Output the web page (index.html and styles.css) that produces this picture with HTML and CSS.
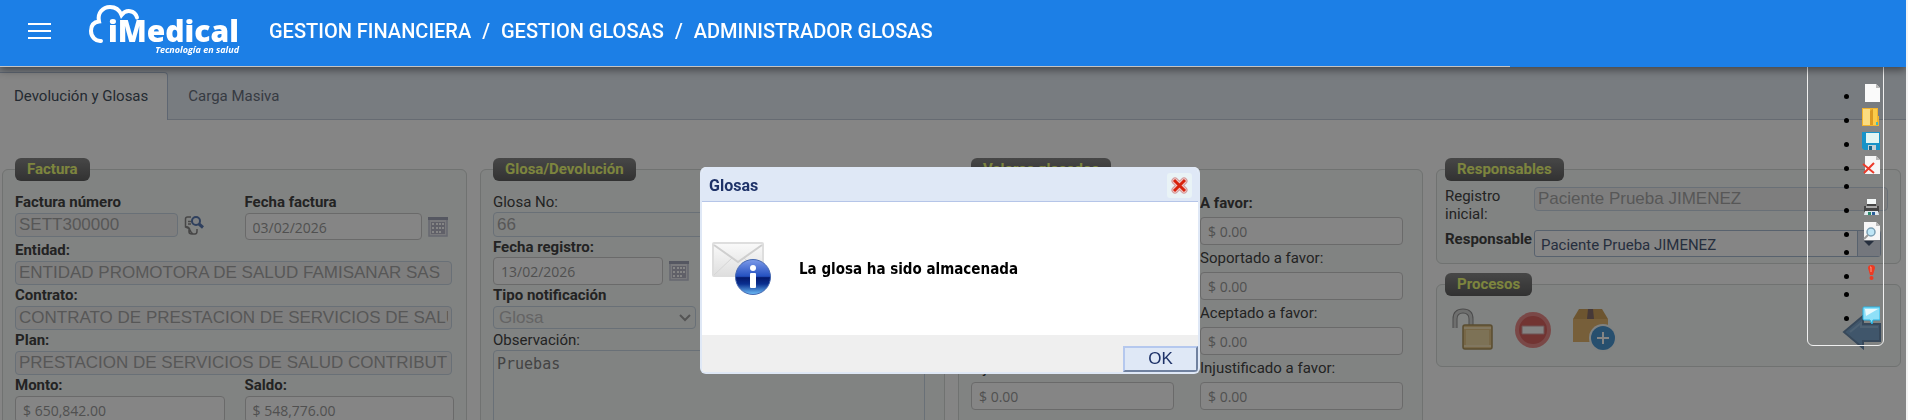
FILE: index.html
```
<!DOCTYPE html>
<html lang="es">

<head>
    <meta charset="UTF-8">
    <meta name="viewport" content="width=device-width, initial-scale=1.0">
    <title>Administrador Glosas</title>
    <link rel="stylesheet" href="styles.css">
</head>

<body>
    <header class="header">
        <button class="menu_btn" type="button" aria-label="Menu">
            <span></span>
            <span></span>
            <span></span>
        </button>
        <a class="logo" href="#" aria-label="iMedical">
            <svg width="156" height="56" viewBox="0 0 156 56">
                <path d="M13 41C8 41.500 3 37 3 31C3 25 6 22 11 21.500C9 13 15 7 22 7C28 7 31.500 10 33.500 15C38 9 47 10 49 17.500" fill="none" stroke="#fff" stroke-width="4" stroke-linecap="round" />
                <text class="logo_name" x="20" y="42">iMedical</text>
                <text class="logo_sub" x="151" y="53" text-anchor="end">Tecnología en salud</text>
            </svg>
        </a>
        <nav class="crumbs">
            <a href="#">GESTION FINANCIERA</a>
            <span>/</span>
            <a href="#">GESTION GLOSAS</a>
            <span>/</span>
            <a href="#">ADMINISTRADOR GLOSAS</a>
        </nav>
    </header>

    <main class="page">
        <div class="tabs">
            <a href="#" class="active">Devolución y Glosas</a>
            <a href="#">Carga Masiva</a>
        </div>

        <form class="panels">
            <!-- Factura -->
            <fieldset class="box factura">
                <legend>Factura</legend>
                <div class="row">
                    <div class="half">
                        <label class="b" for="numero">Factura número</label>
                        <div class="line">
                            <input class="dis numero" id="numero" type="text" value="SETT300000" disabled>
                            <svg class="find" width="20" height="20" viewBox="0 0 20 20">
                                <path d="M0 0H20V20H0Z" fill="#fff" opacity=".2" />
                                <path d="M7 2H3.500Q1.500 2 1.500 4V12L5 13.500V17Q5 19 8 19H11Q13 19 13 16V14M1.500 12Q5 11 6 15Q7 18 9 19M4 6.500H8M4 9H7" fill="none" stroke="#888" stroke-width="1.500" />
                                <circle cx="12" cy="6" r="4" fill="#f4f7fc" stroke="#5b7cb4" stroke-width="2" />
                                <path d="M15 9L19 12.500" stroke="#5b7cb4" stroke-width="3" />
                            </svg>
                        </div>
                    </div>
                    <div class="half">
                        <label class="b" for="fecha">Fecha factura</label>
                        <div class="line">
                            <input class="num fecha" id="fecha" type="text" value="03/02/2026" disabled>
                            <svg class="cal" width="20" height="20" viewBox="0 0 20 20">
                                <path d="M1 1H19V19H1Z" fill="#e8e8ee" stroke="#c4c7d6" stroke-width="1.500" />
                                <path d="M0 1.500H20" stroke="#a4a7ba" stroke-width="3" />
                                <path d="M3 5H17V17H3Z" fill="#b8b8c8" />
                                <path d="M4 6h2v2h-2zM8 6h2v2h-2zM11 6h2v2h-2zM14 6h2v2h-2zM4 10h2v2h-2zM8 10h2v2h-2zM11 10h2v2h-2zM14 10h2v2h-2zM4 14h2v2h-2zM8 14h2v2h-2zM11 14h2v2h-2z" fill="#fff" />
                            </svg>
                        </div>
                    </div>
                </div>
                <label class="b" for="entidad">Entidad:</label>
                <input class="dis" id="entidad" type="text" value="ENTIDAD PROMOTORA DE SALUD FAMISANAR SAS" disabled>
                <label class="b" for="contrato">Contrato:</label>
                <input class="dis" id="contrato" type="text" value="CONTRATO DE PRESTACION DE SERVICIOS DE SALUD" disabled>
                <label class="b" for="plan">Plan:</label>
                <input class="dis" id="plan" type="text" value="PRESTACION DE SERVICIOS DE SALUD CONTRIBUTIVO" disabled>
                <div class="row">
                    <div class="half">
                        <label class="b" for="monto">Monto:</label>
                        <input class="num" id="monto" type="text" value="$ 650,842.00" disabled>
                    </div>
                    <div class="half">
                        <label class="b" for="saldo">Saldo:</label>
                        <input class="num" id="saldo" type="text" value="$ 548,776.00" disabled>
                    </div>
                </div>
            </fieldset>

            <!-- Glosa -->
            <fieldset class="box glosa">
                <legend>Glosa/Devolución</legend>
                <label for="glosano">Glosa No:</label>
                <input class="dis" id="glosano" type="text" value="66" disabled>
                <label class="b" for="registro">Fecha registro:</label>
                <div class="line">
                    <input class="num registro" id="registro" type="text" value="13/02/2026" disabled>
                    <svg class="cal" width="20" height="20" viewBox="0 0 20 20">
                        <path d="M1 1H19V19H1Z" fill="#e8e8ee" stroke="#c4c7d6" stroke-width="1.500" />
                        <path d="M0 1.500H20" stroke="#a4a7ba" stroke-width="3" />
                        <path d="M3 5H17V17H3Z" fill="#b8b8c8" />
                        <path d="M4 6h2v2h-2zM8 6h2v2h-2zM11 6h2v2h-2zM14 6h2v2h-2zM4 10h2v2h-2zM8 10h2v2h-2zM11 10h2v2h-2zM14 10h2v2h-2zM4 14h2v2h-2zM8 14h2v2h-2zM11 14h2v2h-2z" fill="#fff" />
                    </svg>
                </div>
                <label class="b" for="tipo">Tipo notificación</label>
                <div class="select">
                    <select class="dis" id="tipo" disabled>
                        <option>Glosa</option>
                    </select>
                    <svg width="12" height="8" viewBox="0 0 12 8">
                        <path d="M1 1L6 6L11 1" fill="none" stroke="#a2a2a2" stroke-width="2" />
                    </svg>
                </div>
                <label for="obs">Observación:</label>
                <textarea id="obs" disabled>Pruebas</textarea>
            </fieldset>

            <!-- Valores -->
            <fieldset class="box valores">
                <legend>Valores glosados</legend>
                <div class="vals">
                    <div><label class="b" for="v1">Glosado:</label><input class="num" id="v1" type="text" value="$ 0.00" disabled></div>
                    <div><label class="b" for="v2">A favor:</label><input class="num" id="v2" type="text" value="$ 0.00" disabled></div>
                    <div><label for="v3">Soportado:</label><input class="num" id="v3" type="text" value="$ 0.00" disabled></div>
                    <div><label for="v4">Soportado a favor:</label><input class="num" id="v4" type="text" value="$ 0.00" disabled></div>
                    <div><label for="v5">Aceptado:</label><input class="num" id="v5" type="text" value="$ 0.00" disabled></div>
                    <div><label for="v6">Aceptado a favor:</label><input class="num" id="v6" type="text" value="$ 0.00" disabled></div>
                    <div><label for="v7">Injustificado:</label><input class="num" id="v7" type="text" value="$ 0.00" disabled></div>
                    <div><label for="v8">Injustificado a favor:</label><input class="num" id="v8" type="text" value="$ 0.00" disabled></div>
                </div>
            </fieldset>

            <div class="side">
                <fieldset class="box resp">
                    <legend>Responsables</legend>
                    <div class="pair">
                        <label for="inicial">Registro inicial:</label>
                        <input class="dis" id="inicial" type="text" value="Paciente Prueba JIMENEZ" disabled>
                    </div>
                    <div class="pair">
                        <label class="b" for="responsable">Responsable</label>
                        <div class="combo">
                            <input id="responsable" type="text" value="Paciente Prueba JIMENEZ">
                            <button type="button" aria-label="Abrir lista"></button>
                        </div>
                    </div>
                </fieldset>
                <fieldset class="box procs">
                    <legend>Procesos</legend>
                    <div class="icons">
                        <button type="button" aria-label="Desbloquear">
                            <svg width="44" height="44" viewBox="0 0 44 44">
                                <path d="M4 20V11Q4 3 12 3Q20 3 20 11V18" fill="none" stroke="#777" stroke-width="5" />
                                <path d="M4 20V11Q4 3 12 3Q20 3 20 11V18" fill="none" stroke="#ccc" stroke-width="3" />
                                <rect x="12" y="17" width="29" height="24" rx="2" fill="#e0ba6c" stroke="#9a7a35" stroke-width="1.500" />
                                <rect x="15" y="22" width="23" height="15" fill="#efd292" />
                                <path d="M13 20H40M13 38H40" stroke="#f7dfa8" stroke-width="2" />
                            </svg>
                        </button>
                        <button type="button" aria-label="Anular">
                            <svg width="44" height="44" viewBox="0 0 44 44">
                                <circle cx="22" cy="22" r="18" fill="#e8706e" />
                                <circle cx="22" cy="22" r="14" fill="#d33f3c" />
                                <path d="M11 18H33V26H11Z" fill="#fff" stroke="#c88" stroke-width="1" />
                            </svg>
                        </button>
                        <button type="button" aria-label="Agregar paquete">
                            <svg width="46" height="44" viewBox="0 0 46 44">
                                <path d="M8 1H31L37 11H2Z" fill="#c98f35" />
                                <path d="M2 11H37V34H2Z" fill="#e0a54d" />
                                <path d="M17 1H22L23 11H16Z" fill="#6a4a4a" />
                                <circle cx="32" cy="30" r="14" fill="#f6faf8" />
                                <circle cx="32" cy="30" r="12" fill="#2280cc" />
                                <path d="M32 24V36M26 30H38" stroke="#fff" stroke-width="2" />
                            </svg>
                        </button>
                        <button class="back" type="button" aria-label="Regresar">
                            <svg width="40" height="36" viewBox="0 0 40 36">
                                <path d="M2 18L21 2V10H38V27H21V34Z" fill="#5d92c4" stroke="#47709a" stroke-width="2" />
                                <path d="M8 18L19 9V13H36" fill="none" stroke="#7cabd6" stroke-width="2" />
                            </svg>
                        </button>
                    </div>
                </fieldset>
            </div>
        </form>
    </main>

    <div class="overlay"></div>

    <ul class="tools">
        <li>
            <svg width="18" height="18" viewBox="0 0 18 18">
                <path d="M3 0H14L18 4V18H3Z" fill="#fafafa" />
                <path d="M14 0V4H18Z" fill="#b8b8b8" />
            </svg>
        </li>
        <li>
            <svg width="18" height="18" viewBox="0 0 18 18">
                <path d="M0 0H16V8H17V18H0Z" fill="#f2b32c" />
                <path d="M1 1H8V17H1Z" fill="#fbdc80" />
                <path d="M8 3L11 1V17H8Z" fill="#dc9a22" />
                <path d="M11 1H15V17H11Z" fill="#fbcb4a" />
                <path d="M14 14H16V17H14Z" fill="#4bb" />
            </svg>
        </li>
        <li>
            <svg width="18" height="18" viewBox="0 0 18 18">
                <path d="M0 0H18V18H2L0 16Z" fill="#1793c8" />
                <path d="M4 1H17V11H4Z" fill="#e2f5f2" />
                <path d="M6 13H14V18H6Z" fill="#c3d0d6" />
                <path d="M7 14H10V18H7Z" fill="#17658a" />
            </svg>
        </li>
        <li>
            <svg width="18" height="18" viewBox="0 0 18 18">
                <path d="M3 0H14L18 4V18H3Z" fill="#f6f6f6" />
                <path d="M14 0V4H18Z" fill="#b8b8b8" />
                <path d="M1 8L12 17M12 7L2 17" stroke="#ec3a2a" stroke-width="2" />
            </svg>
        </li>
        <li class="sep"></li>
        <li>
            <svg width="18" height="18" viewBox="0 0 18 18">
                <path d="M5 1H14V7H5Z" fill="#f4f8f8" />
                <path d="M2 8H5V6H14V8H17V14H2Z" fill="#444" />
                <path d="M4 8H15V10H4Z" fill="#aaa" />
                <path d="M3 13H16L17 17H2Z" fill="#dfe8ee" />
                <path d="M6 14h3v3h-3z" fill="#2a8a6a" />
                <path d="M10 14h3v3h-3z" fill="#2a5f9a" />
            </svg>
        </li>
        <li>
            <svg width="18" height="18" viewBox="0 0 18 18">
                <path d="M2 0H14L18 4V18H2Z" fill="#f6f6f6" />
                <path d="M14 0V4H18Z" fill="#b8b8b8" />
                <circle cx="9" cy="10" r="4" fill="#bfe6f6" stroke="#7a9fb4" stroke-width="1.500" />
                <path d="M6 13L2 17" stroke="#999" stroke-width="2" />
            </svg>
        </li>
        <li class="sep"></li>
        <li>
            <svg width="18" height="18" viewBox="0 0 18 18">
                <path d="M6 4Q6 1 9.500 1Q13 1 13 4L11 11H8Z" fill="#ee3a22" />
                <circle cx="9.500" cy="14" r="2" fill="#ee3a22" />
                <path d="M8 3H9V8" fill="none" stroke="#ff9a80" stroke-width="1" />
            </svg>
        </li>
        <li class="sep"></li>
        <li>
            <svg width="18" height="18" viewBox="0 0 18 18">
                <path d="M1 2Q1 1 2 1H18V14H11L10 18L8 14H2Q1 14 1 13Z" fill="#8fe0f8" stroke="#27b4e4" stroke-width="1" />
                <path d="M3 3H16L4 10Z" fill="#e6fafe" />
            </svg>
        </li>
    </ul>

    <div class="dialog" role="dialog" aria-labelledby="dlg-title">
        <div class="dialog_title">
            <h2 id="dlg-title">Glosas</h2>
            <button type="button" aria-label="Cerrar">
                <svg width="17" height="17" viewBox="0 0 17 17">
                    <path d="M4 4L13 13M13 4L4 13" stroke="#d49a9a" stroke-width="7" stroke-linecap="round" />
                    <path d="M4 4L13 13M13 4L4 13" stroke="#efcaca" stroke-width="5" stroke-linecap="round" />
                    <path d="M3 3L14 14M14 3L3 14" stroke="#d8220c" stroke-width="3" />
                </svg>
            </button>
        </div>
        <div class="dialog_body">
            <svg width="60" height="54" viewBox="0 0 60 54">
                <defs>
                    <linearGradient id="env" x1="0" y1="0" x2="0" y2="1">
                        <stop offset="0" stop-color="#fafafa" />
                        <stop offset="1" stop-color="#dedede" />
                    </linearGradient>
                    <linearGradient id="ball" x1="0" y1="0" x2="0" y2="1">
                        <stop offset="0" stop-color="#7d9bea" />
                        <stop offset="0.480" stop-color="#2450c0" />
                        <stop offset="0.520" stop-color="#04196c" />
                        <stop offset="0.700" stop-color="#0a2f90" />
                        <stop offset="1" stop-color="#6fc0fa" />
                    </linearGradient>
                </defs>
                <rect x="1" y="1" width="50" height="33" rx="1" fill="url(#env)" stroke="#dedede" stroke-width="2" />
                <path d="M2 33L20 16M50 33L32 16" stroke="#d6d6d6" stroke-width="1" />
                <path d="M2 3L26 20L50 3" fill="none" stroke="#cfcfcf" stroke-width="2" />
                <circle cx="41" cy="35" r="17.500" fill="url(#ball)" stroke="#4668b0" stroke-width="1" />
                <circle cx="41" cy="26" r="3" fill="#fff" />
                <rect x="38" y="31" width="6" height="15" rx="1" fill="#fff" />
            </svg>
            <p>La glosa ha sido almacenada</p>
        </div>
        <div class="dialog_foot">
            <button type="button">OK</button>
        </div>
    </div>
</body>

</html>
```
FILE: styles.css
```
* {
    margin: 0;
    padding: 0;
    box-sizing: border-box;
}

html {
    background: #f3f3f3;
}

body {
    margin-right: 2px;
    font-family: Roboto, "Liberation Sans", sans-serif;
    font-size: 15px;
    color: #444;
}

a {
    text-decoration: none;
    color: inherit;
}

button {
    border: none;
    background: none;
}

svg {
    display: block;
    flex: none;
}

/* cabecera */
.header {
    position: relative;
    z-index: 5;
    height: 67px;
    padding: 0 28px 16px;
    display: flex;
    align-items: center;
    background: linear-gradient(#c4c4c4, #c4c4c4) left bottom / calc(100% - 396px) 1px no-repeat #1c7fe6;
    box-shadow: 0 3px 8px rgba(0, 0, 0, .45);
    color: #fff;
}

.menu_btn {
    width: 23px;
    padding-top: 11px;
    display: flex;
    flex-direction: column;
    gap: 5px;
}

.menu_btn span {
    height: 2px;
    background: #fff;
}

.logo {
    height: 56px;
    margin: 5px 0 0 37px;
}

.logo_name {
    font: 800 30px "Open Sans", sans-serif;
    fill: #fff;
}

.logo_sub {
    font: italic 700 9px "Open Sans", sans-serif;
    fill: #fff;
}

.crumbs {
    margin: 11px 0 0 25px;
    display: flex;
    gap: 11px;
    font-size: 20px;
    font-weight: 500;
    line-height: 24px;
}

/* pestañas */
.page {
    height: calc(100vh - 67px);
    overflow: hidden;
    background: #fff;
}

.tabs {
    height: 53px;
    padding-top: 5px;
    display: flex;
    background: #e7edf6;
    border-bottom: 1px solid #c3cddb;
    color: #69727f;
    font-size: 15px;
    line-height: 48px;
}

.tabs a {
    padding: 0 20px;
}

.tabs .active {
    height: 48px;
    padding: 0 19px 0 14px;
    background: #fff;
    border: solid #b4c4da;
    border-width: 1px 1px 0 0;
    border-radius: 0 4px 0 0;
    color: #46525f;
    line-height: 46px;
}

/* paneles */
.panels {
    padding: 38px 5px 0 2px;
    display: grid;
    grid-template-columns: repeat(4, minmax(0, 1fr));
    gap: 13px;
}

.box {
    min-width: 0;
    padding: 0 12px;
    background: #f7fbf9;
    border: 1px solid #d6dad8;
    border-radius: 6px;
}

.factura {
    padding-top: 11px;
}

.glosa {
    padding-top: 11px;
    padding-right: 19px;
}

.valores {
    padding-top: 9px;
    padding-right: 19px;
}

legend {
    height: 23px;
    padding: 0 12px;
    border-radius: 6px;
    background: linear-gradient(#888, #606060);
    color: #f0ff77;
    font-weight: bold;
    line-height: 22px;
}

label {
    display: block;
    line-height: 21px;
    white-space: nowrap;
}

.b {
    font-weight: bold;
}

.row {
    display: grid;
    grid-template-columns: 1fr 1fr;
    gap: 20px;
}

.row .half {
    min-width: 0;
}

.line {
    display: flex;
    align-items: center;
    gap: 6px;
}

.numero {
    flex: 0 0 163px;
}

.fecha {
    flex: 0 0 177px;
}

.registro {
    flex: 0 0 170px;
}

input,
select,
textarea {
    display: block;
    width: 100%;
    height: 24px;
    padding: 0 3px;
    border: 1px solid #c9d6e4;
    border-radius: 4px;
    background: #f7fbf9;
    color: #b4b8b6;
    font: 17px "Liberation Sans", Arial, sans-serif;
}

.dis {
    background: #f2f2f2;
    color: #a8a8a8;
}

.num {
    height: 27px;
    padding: 1px 7px 0;
    border-color: #ccc;
    background: #fff;
    color: #9a9a9a;
    font: 14px "Open Sans", sans-serif;
}

.factura > .dis {
    width: calc(100% - 2px);
}

.factura .line {
    height: 27px;
    align-items: flex-start;
}

.factura .find {
    margin-top: 2px;
}

.factura .cal {
    margin-top: 4px;
}

.glosa label {
    line-height: 20px;
}

.glosa > .dis {
    height: 25px;
    background: #f6f9f8;
}

.glosa .num {
    height: 28px;
}

.select {
    width: 203px;
    height: 25px;
    display: flex;
    align-items: center;
    position: relative;
}

.select select {
    appearance: none;
    height: 23px;
    padding: 0 5px;
    background: #f6f9f8;
    color: #c0c0c0;
    opacity: 1;
}

.select svg {
    position: absolute;
    right: 5px;
}

textarea {
    height: 140px;
    padding: 4px 3px;
    resize: none;
    color: #828282;
    font: 15px "DejaVu Sans Mono", monospace;
}

.vals {
    display: grid;
    grid-template-columns: 1fr 1fr;
    gap: 0 26px;
}

.vals label {
    line-height: 27px;
}

.vals .num {
    height: 28px;
}

.side {
    display: flex;
    flex-direction: column;
    gap: 9px;
}

.side .box {
    padding: 0 8px;
}

.side .resp {
    padding: 6px 12px 6px 8px;
}

.pair {
    display: grid;
    grid-template-columns: 82px minmax(0, 1fr);
    gap: 7px;
}

.pair + .pair {
    margin-top: 7px;
}

.pair label {
    line-height: 18px;
    white-space: normal;
}

.combo {
    width: calc(100% - 7px);
    height: 27px;
    display: flex;
    border: 1px solid #a9bcd4;
    border-radius: 3px;
    background: #fff;
}

.combo input {
    height: 25px;
    padding: 2px 6px 0;
    border: none;
    background: none;
    color: #4a5a78;
    font: 15px Roboto, sans-serif;
}

.combo button {
    flex: 0 0 23px;
    display: flex;
    align-items: center;
    justify-content: center;
    border-left: 1px solid #a9bcd4;
    background: #dfe5ef;
}

.combo button::before {
    content: "";
    border: 5px solid transparent;
    border-top-color: #4a5a78;
    border-bottom: none;
}

.icons {
    height: 70px;
    padding: 12px 10px 0 6px;
    display: flex;
    gap: 16px;
}

.icons button {
    height: 44px;
    opacity: .8;
}

.icons .back {
    margin-left: auto;
    padding-top: 3px;
}

.overlay {
    position: fixed;
    inset: 0 2px 0 0;
    background: rgba(0, 0, 0, .48);
}

/* barra flotante */
.tools {
    position: fixed;
    top: 60px;
    right: 24px;
    width: 77px;
    height: 286px;
    padding: 21px 3px 0 36px;
    border: 1px solid #f0f0f0;
    border-radius: 6px;
    list-style: none;
}

.tools li {
    height: 24px;
    display: flex;
    justify-content: space-between;
    align-items: flex-start;
}

.tools li::before {
    content: "";
    width: 5px;
    height: 5px;
    margin-top: 12px;
    border-radius: 50%;
    background: #000;
}

.tools svg {
    margin-top: 2px;
}

.tools .sep {
    height: 18px;
}

.tools .sep::before {
    margin-top: 6px;
}

/* mensaje */
.dialog {
    position: fixed;
    top: 167px;
    left: calc(50% - 254px);
    z-index: 10;
    width: 500px;
    border: 2px solid #dfe8f6;
    border-top: none;
    border-radius: 6px;
    background: #fff;
    overflow: hidden;
}

.dialog_title {
    height: 35px;
    padding: 2px 6px 0 7px;
    display: flex;
    align-items: center;
    justify-content: space-between;
    background: #dfe8f6;
    border-bottom: 1px solid #b5c5e8;
}

.dialog_title h2 {
    color: #1e3268;
    font-size: 16px;
}

.dialog_title button {
    width: 25px;
    height: 25px;
    display: flex;
    align-items: center;
    justify-content: center;
    border-radius: 3px;
    background: #e9f3f6;
}

.dialog_body {
    height: 133px;
    padding: 0 10px;
    display: flex;
    align-items: center;
    gap: 27px;
    color: #000;
    font: bold 15px "DejaVu Sans Condensed", "DejaVu Sans", sans-serif;
}

.dialog_foot {
    padding-top: 11px;
    display: flex;
    justify-content: flex-end;
    background: #efefef;
}

.dialog_foot button {
    width: 75px;
    height: 26px;
    border: 2px solid;
    border-color: #b5c8ee #70819f #70819f #b5c8ee;
    background: #dfe8f6;
    color: #1e3268;
    font: 17px "Liberation Sans", Arial, sans-serif;
}
```
